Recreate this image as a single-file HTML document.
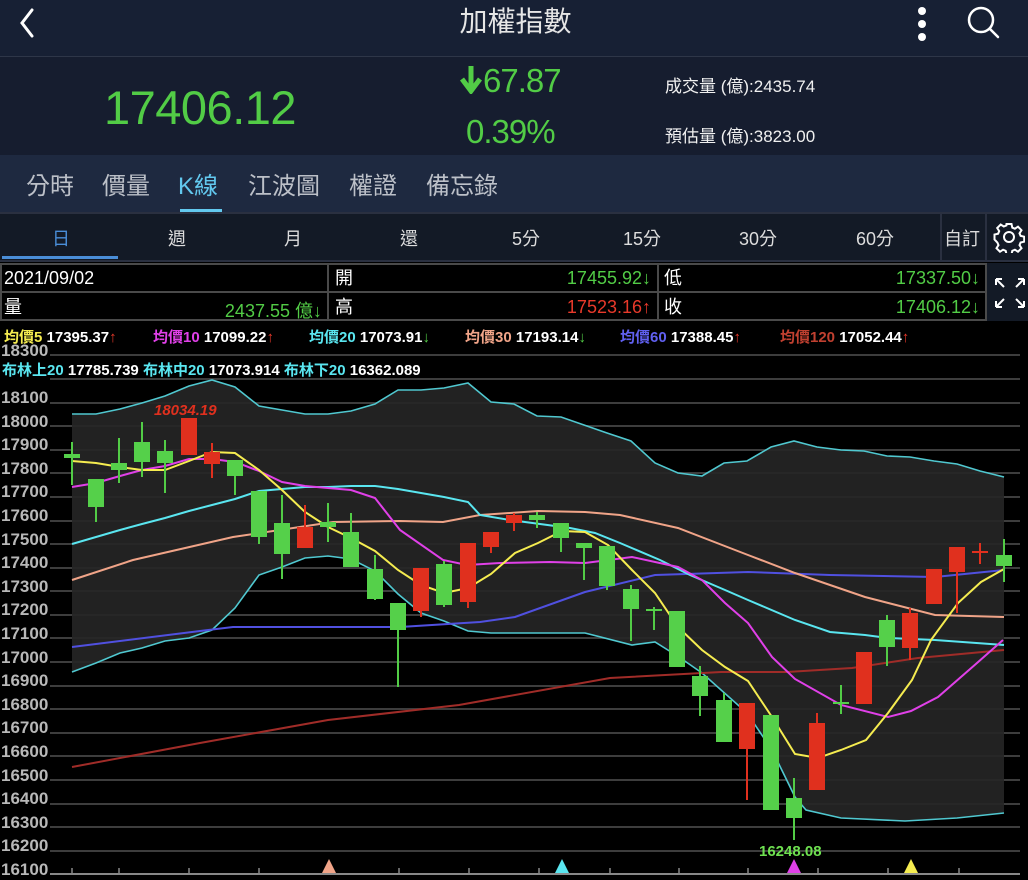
<!DOCTYPE html>
<html><head><meta charset="utf-8"><style>
*{margin:0;padding:0;box-sizing:border-box}
body{width:1028px;height:880px;background:#000;overflow:hidden;position:relative;font-family:"Liberation Sans","Noto Sans CJK TC",sans-serif;color:#fff}
.a{position:absolute;white-space:nowrap}
.g{color:#52cc46}.r{color:#e8392a}
</style></head><body>
<!-- header -->
<div class="a" style="left:0;top:0;width:1028px;height:56px;background:#172034"></div>
<div class="a" style="left:0;top:56px;width:1028px;height:1px;background:#2e3648"></div>
<svg class="a" style="left:10px;top:6px" width="30" height="34"><path d="M22 4 L12 17 L22 30" stroke="#fff" stroke-width="3" fill="none" stroke-linecap="round"/></svg>
<div class="a" style="left:0;width:1028px;top:0px;text-align:center;font-size:28px;color:#e6e6e6;padding-left:3px">加權指數</div>
<svg class="a" style="left:912px;top:2px" width="20" height="40"><circle cx="10" cy="9" r="4" fill="#fff"/><circle cx="10" cy="22" r="4" fill="#fff"/><circle cx="10" cy="35" r="4" fill="#fff"/></svg>
<svg class="a" style="left:962px;top:2px" width="40" height="40"><circle cx="19" cy="18" r="12" stroke="#fff" stroke-width="2.5" fill="none"/><path d="M28 27 L36 35" stroke="#fff" stroke-width="2.5" stroke-linecap="round"/></svg>
<!-- quote -->
<div class="a" style="left:0;top:57px;width:1028px;height:98px;background:#161d2f"></div>
<div class="a g" style="left:104px;top:80px;font-size:47px;letter-spacing:-0.5px">17406.12</div>
<div class="a g" style="left:459px;top:62px;font-size:33px;letter-spacing:-1px"><svg width="24" height="30" style="vertical-align:-2px"><path d="M12 2 V24 M3 15 L12 27 L21 15" stroke="#52cc46" stroke-width="5" fill="none"/></svg>67.87</div>
<div class="a g" style="left:466px;top:113px;font-size:33px;letter-spacing:-1px">0.39%</div>
<div class="a" style="left:665px;top:72px;font-size:17px;color:#f0f0f0">成交量 (億):2435.74</div>
<div class="a" style="left:665px;top:122px;font-size:17px;color:#f0f0f0">預估量 (億):3823.00</div>
<!-- tabs -->
<div class="a" style="left:0;top:155px;width:1028px;height:57px;background:#1e2940"></div>
<div class="a" style="left:26px;top:166px;font-size:24px;color:#bcc0c8">分時</div>
<div class="a" style="left:102px;top:166px;font-size:24px;color:#bcc0c8">價量</div>
<div class="a" style="left:178px;top:166px;font-size:24px;color:#62c8ee">K線</div>
<div class="a" style="left:248px;top:166px;font-size:24px;color:#bcc0c8">江波圖</div>
<div class="a" style="left:349px;top:166px;font-size:24px;color:#bcc0c8">權證</div>
<div class="a" style="left:426px;top:166px;font-size:24px;color:#bcc0c8">備忘錄</div>
<div class="a" style="left:180px;top:209px;width:42px;height:3px;background:#62c8ee"></div>
<!-- period bar -->
<div class="a" style="left:0;top:212px;width:1028px;height:50px;background:#131a26;border-top:2px solid #2a3040;border-bottom:2px solid #2a3040"></div>
<div class="a" style="left:940px;top:214px;width:2px;height:46px;background:#2a3040"></div>
<div class="a" style="left:985px;top:214px;width:2px;height:46px;background:#2a3040"></div>
<div class="a" style="left:2px;top:256px;width:116px;height:3px;background:#4a8ed8"></div>
<div class="a" style="left:52px;top:225px;font-size:18px;color:#4a8ed8">日</div>
<div class="a" style="left:168px;top:225px;font-size:18px;color:#ddd">週</div>
<div class="a" style="left:284px;top:225px;font-size:18px;color:#ddd">月</div>
<div class="a" style="left:400px;top:225px;font-size:18px;color:#ddd">還</div>
<div class="a" style="left:512px;top:225px;font-size:18px;color:#ddd">5分</div>
<div class="a" style="left:623px;top:225px;font-size:18px;color:#ddd">15分</div>
<div class="a" style="left:739px;top:225px;font-size:18px;color:#ddd">30分</div>
<div class="a" style="left:856px;top:225px;font-size:18px;color:#ddd">60分</div>
<div class="a" style="left:944px;top:225px;font-size:18px;color:#ddd">自訂</div>
<svg class="a" style="left:993px;top:221px" width="32" height="32" viewBox="0 0 32 32"><g fill="none" stroke="#fff" stroke-width="2"><circle cx="16" cy="16" r="5"/><path d="M13.5 3h5l.8 3.6 2.6 1.1 3.1-2 3.5 3.5-2 3.1 1.1 2.6 3.6.8v5l-3.6.8-1.1 2.6 2 3.1-3.5 3.5-3.1-2-2.6 1.1-.8 3.6h-5l-.8-3.6-2.6-1.1-3.1 2-3.5-3.5 2-3.1-1.1-2.6L1.5 18.5v-5l3.6-.8 1.1-2.6-2-3.1 3.5-3.5 3.1 2 2.6-1.1z"/></g></svg>
<!-- info table -->
<div class="a" style="left:0;top:263px;width:986px;height:58px;background:#000"></div>
<div class="a" style="left:986px;top:263px;width:42px;height:58px;background:#131a26"></div>
<svg class="a" style="left:0;top:263px" width="988" height="58"><g stroke="#4a4a4a" stroke-width="2" fill="none"><rect x="1" y="1" width="985" height="56"/><line x1="0" y1="29" x2="986" y2="29"/><line x1="328" y1="0" x2="328" y2="58"/><line x1="658" y1="0" x2="658" y2="58"/></g></svg>
<div class="a" style="left:4px;top:268px;font-size:18px">2021/09/02</div>
<div class="a" style="left:4px;top:293px;font-size:18px">量</div>
<div class="a g" style="left:0;width:322px;text-align:right;top:297px;font-size:18px">2437.55 億↓</div>
<div class="a" style="left:335px;top:264px;font-size:18px">開</div>
<div class="a g" style="left:330px;width:321px;text-align:right;top:268px;font-size:18px">17455.92↓</div>
<div class="a" style="left:335px;top:293px;font-size:18px">高</div>
<div class="a r" style="left:330px;width:321px;text-align:right;top:297px;font-size:18px">17523.16↑</div>
<div class="a" style="left:664px;top:264px;font-size:18px">低</div>
<div class="a g" style="left:660px;width:320px;text-align:right;top:268px;font-size:18px">17337.50↓</div>
<div class="a" style="left:664px;top:293px;font-size:18px">收</div>
<div class="a g" style="left:660px;width:320px;text-align:right;top:297px;font-size:18px">17406.12↓</div>
<svg class="a" style="left:993px;top:276px" width="34" height="34"><g stroke="#fff" stroke-width="2" fill="none"><path d="M3 3 L11 11 M3 3 h6 M3 3 v6"/><path d="M31 3 L23 11 M31 3 h-6 M31 3 v6"/><path d="M3 31 L11 23 M3 31 h6 M3 31 v-6"/><path d="M31 31 L23 23 M31 31 h-6 M31 31 v-6"/></g></svg>
<!-- chart -->
<svg class="a" style="left:0;top:0" width="1028" height="880">
<g stroke="#3d3d3d" stroke-width="2">
<line x1="50" y1="355" x2="1020" y2="355"/><line x1="50" y1="379" x2="1020" y2="379"/><line x1="50" y1="403" x2="1020" y2="403"/><line x1="50" y1="426" x2="1020" y2="426"/><line x1="50" y1="450" x2="1020" y2="450"/><line x1="50" y1="473" x2="1020" y2="473"/><line x1="50" y1="497" x2="1020" y2="497"/><line x1="50" y1="521" x2="1020" y2="521"/><line x1="50" y1="544" x2="1020" y2="544"/><line x1="50" y1="568" x2="1020" y2="568"/><line x1="50" y1="591" x2="1020" y2="591"/><line x1="50" y1="615" x2="1020" y2="615"/><line x1="50" y1="638" x2="1020" y2="638"/><line x1="50" y1="662" x2="1020" y2="662"/><line x1="50" y1="686" x2="1020" y2="686"/><line x1="50" y1="709" x2="1020" y2="709"/><line x1="50" y1="733" x2="1020" y2="733"/><line x1="50" y1="756" x2="1020" y2="756"/><line x1="50" y1="780" x2="1020" y2="780"/><line x1="50" y1="804" x2="1020" y2="804"/><line x1="50" y1="827" x2="1020" y2="827"/><line x1="50" y1="851" x2="1020" y2="851"/>
</g>
<polygon fill="#252525" fill-opacity="0.92" points="72,414 96,414 120,409 142,403 165,396 189,386 212,380 235,387 259,406 282,410 305,414 328,414 351,411 375,404 398,390 421,390 444,388 468,383 491,402 514,404 537,416 561,417 584,425 607,433 631,441 655,463 678,473 702,476 724,463 747,461 771,447 794,441 817,447 841,450 864,451 887,456 910,457 934,461 957,464 980,471 1004,477 1004,813 957,818 905,821 841,818 806,810 795,797 772,750 747,713 702,673 679,657 655,642 632,645 585,633 491,633 468,631 444,621 421,613 398,594 375,571 351,559 328,556 305,558 282,567 259,575 235,608 212,630 189,638 165,641 142,648 120,653 96,663 72,672"/>
<g fill="none" stroke-width="1.6">
<polyline stroke="#50c8d0" points="72,414 96,414 120,409 142,403 165,396 189,386 212,380 235,387 259,406 282,410 305,414 328,414 351,411 375,404 398,390 421,390 444,388 468,383 491,402 514,404 537,416 561,417 584,425 607,433 631,441 655,463 678,473 702,476 724,463 747,461 771,447 794,441 817,447 841,450 864,451 887,456 910,457 934,461 957,464 980,471 1004,477"/>
<polyline stroke="#50c8d0" points="72,672 96,663 120,653 142,648 165,641 189,638 212,630 235,608 259,575 282,567 305,558 328,556 351,559 375,571 398,594 421,613 444,621 468,631 491,633 585,633 632,645 655,642 679,657 702,673 747,713 772,750 795,797 806,810 841,818 905,821 957,818 1004,813"/>
<polyline stroke="#a02c28" stroke-width="2" points="72,767 200,743 328,720 459,705 610,678 721,672 787,672 852,668 918,658 1004,650"/>
<polyline stroke="#5050e0" stroke-width="2" points="72,647 200,631 233,627 400,627 480,622 515,617 585,592 655,575 748,572 830,575 935,577 1004,570"/>
<polyline stroke="#f0a488" stroke-width="2" points="72,580 133,560 233,537 333,522 400,521 443,522 480,515 538,511 585,512 620,515 678,528 748,555 795,573 865,597 935,615 1004,617"/>
<polyline stroke="#5ae6f0" stroke-width="2" points="72,544 96,537 120,530 142,524 165,518 189,511 212,505 235,499 259,491 282,489 305,487 328,487 351,486 375,486 398,489 421,493 444,497 468,502 480,515 510,520 540,524 570,528 595,533 620,543 660,560 690,575 725,590 748,600 795,620 830,632 865,635 888,638 935,640 1004,645"/>
<polyline stroke="#e040e8" stroke-width="2" points="72,487 96,483 120,476 142,470 165,466 189,459 212,459 235,462 259,471 282,482 305,486 328,488 351,490 375,498 400,530 443,560 467,565 500,563 550,562 585,563 632,557 678,567 702,580 725,603 748,623 772,657 795,679 841,705 888,717 911,711 938,697 977,663 1003,640"/>
<polyline stroke="#f5ec50" stroke-width="2" points="72,461 96,463 120,467 142,470 165,470 189,461 212,452 235,453 259,470 282,490 305,512 328,527 351,538 375,551 398,570 421,585 444,593 468,588 491,574 515,553 538,543 562,531 585,532 608,545 632,570 655,593 678,627 702,650 725,667 748,681 772,717 795,754 818,758 841,750 866,740 888,713 912,680 931,640 958,603 981,582 1004,569"/>
</g>
<g>
<g stroke="#52cc46" stroke-width="2">
<line x1="72" y1="442" x2="72" y2="485"/><line x1="96" y1="479" x2="96" y2="522"/><line x1="119" y1="438" x2="119" y2="483"/><line x1="142" y1="422" x2="142" y2="477"/><line x1="165" y1="440" x2="165" y2="493"/><line x1="235" y1="460" x2="235" y2="495"/><line x1="259" y1="491" x2="259" y2="544"/><line x1="282" y1="495" x2="282" y2="579"/><line x1="328" y1="503" x2="328" y2="542"/><line x1="351" y1="513" x2="351" y2="567"/><line x1="375" y1="555" x2="375" y2="600"/><line x1="398" y1="603" x2="398" y2="687"/><line x1="444" y1="561" x2="444" y2="607"/><line x1="537" y1="512" x2="537" y2="528"/><line x1="561" y1="523" x2="561" y2="552"/><line x1="584" y1="543" x2="584" y2="580"/><line x1="607" y1="546" x2="607" y2="590"/><line x1="631" y1="585" x2="631" y2="641"/><line x1="654" y1="607" x2="654" y2="630"/><line x1="700" y1="666" x2="700" y2="716"/><line x1="724" y1="693" x2="724" y2="742"/><line x1="794" y1="778" x2="794" y2="840"/><line x1="841" y1="685" x2="841" y2="714"/><line x1="887" y1="615" x2="887" y2="666"/><line x1="1004" y1="539" x2="1004" y2="582"/>
</g>
<g fill="#55d04a">
<rect x="64" y="454" width="16" height="4"/><rect x="88" y="479" width="16" height="28"/><rect x="111" y="463" width="16" height="7"/><rect x="134" y="442" width="16" height="20"/><rect x="157" y="451" width="16" height="12"/><rect x="227" y="460" width="16" height="16"/><rect x="251" y="491" width="16" height="46"/><rect x="274" y="523" width="16" height="31"/><rect x="320" y="522" width="16" height="5"/><rect x="343" y="532" width="16" height="35"/><rect x="367" y="569" width="16" height="30"/><rect x="390" y="603" width="16" height="27"/><rect x="436" y="564" width="16" height="41"/><rect x="529" y="515" width="16" height="5"/><rect x="553" y="523" width="16" height="15"/><rect x="576" y="543" width="16" height="5"/><rect x="599" y="546" width="16" height="40"/><rect x="623" y="589" width="16" height="20"/><rect x="646" y="609" width="16" height="2"/><rect x="669" y="611" width="16" height="56"/><rect x="692" y="676" width="16" height="20"/><rect x="716" y="700" width="16" height="42"/><rect x="763" y="715" width="16" height="95"/><rect x="786" y="798" width="16" height="20"/><rect x="833" y="702" width="16" height="2"/><rect x="879" y="620" width="16" height="27"/><rect x="996" y="555" width="16" height="11"/>
</g>
<g stroke="#e0301e" stroke-width="2">
<line x1="212" y1="443" x2="212" y2="478"/><line x1="305" y1="505" x2="305" y2="548"/><line x1="421" y1="568" x2="421" y2="617"/><line x1="468" y1="543" x2="468" y2="608"/><line x1="491" y1="532" x2="491" y2="553"/><line x1="514" y1="513" x2="514" y2="531"/><line x1="747" y1="703" x2="747" y2="800"/><line x1="817" y1="713" x2="817" y2="790"/><line x1="910" y1="608" x2="910" y2="660"/><line x1="957" y1="547" x2="957" y2="613"/><line x1="980" y1="543" x2="980" y2="564"/>
</g>
<g fill="#e0301e">
<rect x="181" y="418" width="16" height="37"/><rect x="204" y="452" width="16" height="12"/><rect x="297" y="527" width="16" height="21"/><rect x="413" y="568" width="16" height="43"/><rect x="460" y="543" width="16" height="59"/><rect x="483" y="532" width="16" height="15"/><rect x="506" y="515" width="16" height="8"/><rect x="739" y="703" width="16" height="46"/><rect x="809" y="723" width="16" height="67"/><rect x="856" y="652" width="16" height="52"/><rect x="902" y="613" width="16" height="35"/><rect x="926" y="569" width="16" height="35"/><rect x="949" y="547" width="16" height="25"/><rect x="972" y="551" width="16" height="2"/>
</g>
</g>
<line x1="50" y1="874" x2="1020" y2="874" stroke="#888" stroke-width="2"/>
<g stroke="#888" stroke-width="1.5"><line x1="72" y1="868" x2="72" y2="874"/><line x1="119" y1="868" x2="119" y2="874"/><line x1="189" y1="868" x2="189" y2="874"/><line x1="259" y1="868" x2="259" y2="874"/><line x1="399" y1="868" x2="399" y2="874"/><line x1="469" y1="868" x2="469" y2="874"/><line x1="539" y1="868" x2="539" y2="874"/><line x1="610" y1="868" x2="610" y2="874"/><line x1="679" y1="868" x2="679" y2="874"/><line x1="748" y1="868" x2="748" y2="874"/><line x1="818" y1="868" x2="818" y2="874"/><line x1="888" y1="868" x2="888" y2="874"/><line x1="959" y1="868" x2="959" y2="874"/></g>
<polygon points="329,859 322,873 336,873" fill="#f0a488"/>
<polygon points="562,859 555,873 569,873" fill="#5ae6f0"/>
<polygon points="794,859 787,873 801,873" fill="#e040e8"/>
<polygon points="911,859 904,873 918,873" fill="#f5ec50"/>
<g font-family="Liberation Sans, sans-serif" font-weight="bold" font-size="17" fill="#b8b8b8">
<text x="1" y="356">18300</text><text x="1" y="403">18100</text><text x="1" y="427">18000</text><text x="1" y="450">17900</text><text x="1" y="474">17800</text><text x="1" y="497">17700</text><text x="1" y="521">17600</text><text x="1" y="545">17500</text><text x="1" y="568">17400</text><text x="1" y="592">17300</text><text x="1" y="615">17200</text><text x="1" y="639">17100</text><text x="1" y="663">17000</text><text x="1" y="686">16900</text><text x="1" y="710">16800</text><text x="1" y="733">16700</text><text x="1" y="757">16600</text><text x="1" y="781">16500</text><text x="1" y="804">16400</text><text x="1" y="828">16300</text><text x="1" y="851">16200</text><text x="1" y="875">16100</text>
</g>
<text x="154" y="415" font-family="Liberation Sans, sans-serif" font-weight="bold" font-style="italic" font-size="15" fill="#e0301e">18034.19</text>
<text x="759" y="856" font-family="Liberation Sans, sans-serif" font-weight="bold" font-size="15" fill="#6ee050">16248.08</text>
<g font-family="Liberation Sans, Noto Sans CJK TC, sans-serif" font-weight="bold" font-size="15">
<text x="4" y="342"><tspan fill="#f5ec50">均價5 </tspan><tspan fill="#fff">17395.37</tspan><tspan fill="#e8392a">↑</tspan></text>
<text x="153" y="342"><tspan fill="#e040e8">均價10 </tspan><tspan fill="#fff">17099.22</tspan><tspan fill="#e8392a">↑</tspan></text>
<text x="309" y="342"><tspan fill="#5ae6f0">均價20 </tspan><tspan fill="#fff">17073.91</tspan><tspan fill="#52cc46">↓</tspan></text>
<text x="465" y="342"><tspan fill="#f0a488">均價30 </tspan><tspan fill="#fff">17193.14</tspan><tspan fill="#52cc46">↓</tspan></text>
<text x="620" y="342"><tspan fill="#6060f0">均價60 </tspan><tspan fill="#fff">17388.45</tspan><tspan fill="#e8392a">↑</tspan></text>
<text x="780" y="342"><tspan fill="#c04030">均價120 </tspan><tspan fill="#fff">17052.44</tspan><tspan fill="#e8392a">↑</tspan></text>
<text x="2" y="375"><tspan fill="#5ae6f0">布林上20 </tspan><tspan fill="#fff">17785.739 </tspan><tspan fill="#5ae6f0">布林中20 </tspan><tspan fill="#fff">17073.914 </tspan><tspan fill="#5ae6f0">布林下20 </tspan><tspan fill="#fff">16362.089</tspan></text>
</g>
</svg>
</body></html>
